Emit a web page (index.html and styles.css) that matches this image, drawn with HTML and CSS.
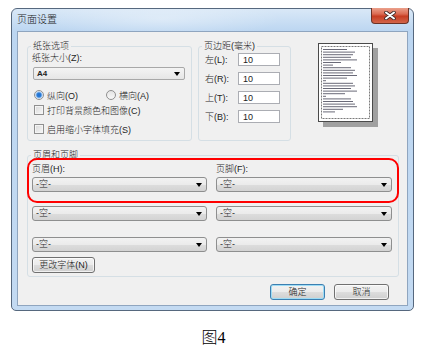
FILE: index.html
```html
<!DOCTYPE html>
<html lang="zh-CN">
<head>
  <meta charset="UTF-8" />
  <title>页面设置</title>
  <link rel="stylesheet" href="styles.css">
</head>
<body>

  <div class="window">
    <div class="titlebar">
      <span class="title">页面设置</span>
      <span class="close-btn">
        <svg width="12" height="9" viewBox="0 0 12 9">
          <path d="M2 1.5 L10 7.5 M10 1.5 L2 7.5" stroke="#3b2a28" stroke-width="3.6" stroke-linecap="round"/>
          <path d="M2 1.5 L10 7.5 M10 1.5 L2 7.5" stroke="#fff" stroke-width="2" stroke-linecap="round"/>
        </svg>
      </span>
    </div>

    <div class="client">
      <div class="top-row">
        <div class="group paper">
          <span class="legend">纸张选项</span>
          <div class="label">纸张大小(Z):</div>
          <div class="combo combo-flat"><span class="a4">A4</span><i class="arrow"></i></div>
          <div class="radio-row">
            <span class="radio-item first"><i class="radio checked"></i>纵向(O)</span>
            <span class="radio-item"><i class="radio"></i>横向(A)</span>
          </div>
          <div class="check-row"><i class="check"></i>打印背景颜色和图像(C)</div>
          <div class="check-row second"><i class="check"></i>启用缩小字体填充(S)</div>
        </div>

        <div class="group margins">
          <span class="legend">页边距(毫米)</span>
          <div class="margin-row"><span class="m-label">左(L):</span><span class="field">10</span></div>
          <div class="margin-row"><span class="m-label">右(R):</span><span class="field">10</span></div>
          <div class="margin-row"><span class="m-label">上(T):</span><span class="field">10</span></div>
          <div class="margin-row"><span class="m-label">下(B):</span><span class="field">10</span></div>
        </div>

        <div class="preview">
          <svg width="55" height="79" viewBox="0 0 55 79">
            <rect x="0.5" y="0.5" width="54" height="78" fill="#fff" stroke="#4a4a4a"/>
            <rect x="3.5" y="3.5" width="48" height="72" fill="none" stroke="#7a7a7a" stroke-dasharray="2 1"/>
            <g fill="#6a6a78">
              <rect x="5" y="6" width="24" height="1"/>
              <rect x="5" y="8.6" width="32" height="1"/>
              <rect x="5" y="11.2" width="30" height="1"/>
              <rect x="5" y="13.8" width="28" height="1"/>
              <rect x="5" y="16.4" width="34" height="1"/>
              <rect x="5" y="19" width="18" height="1"/>
              <rect x="5" y="21.6" width="10" height="1"/>
              <rect x="5" y="24.2" width="28" height="1"/>
              <rect x="5" y="26.8" width="32" height="1"/>
              <rect x="5" y="29.4" width="30" height="1"/>
              <rect x="5" y="32" width="34" height="1"/>
              <rect x="5" y="34.6" width="24" height="1"/>
              <rect x="5" y="37.2" width="3" height="1"/>
              <rect x="5" y="39.8" width="30" height="1"/>
              <rect x="5" y="42.4" width="32" height="1"/>
              <rect x="5" y="45" width="28" height="1"/>
              <rect x="5" y="47.6" width="34" height="1"/>
              <rect x="5" y="50.2" width="22" height="1"/>
              <rect x="5" y="52.8" width="3" height="1"/>
              <rect x="5" y="55.4" width="28" height="1"/>
              <rect x="5" y="58" width="30" height="1"/>
              <rect x="5" y="60.6" width="32" height="1"/>
              <rect x="5" y="63.2" width="34" height="1"/>
              <rect x="5" y="65.8" width="20" height="1"/>
              <rect x="5" y="68.4" width="12" height="1"/>
            </g>
          </svg>
        </div>
      </div>

      <div class="group hf">
        <span class="legend">页眉和页脚</span>
        <div class="hf-row labels">
          <span class="col">页眉(H):</span>
          <span class="col">页脚(F):</span>
        </div>
        <div class="hf-row row1">
          <div class="combo col"><span>-空-</span><i class="arrow"></i></div>
          <div class="combo col"><span>-空-</span><i class="arrow"></i></div>
        </div>
        <div class="hf-row row2">
          <div class="combo col"><span>-空-</span><i class="arrow"></i></div>
          <div class="combo col"><span>-空-</span><i class="arrow"></i></div>
        </div>
        <div class="hf-row row3">
          <div class="combo col"><span>-空-</span><i class="arrow"></i></div>
          <div class="combo col"><span>-空-</span><i class="arrow"></i></div>
        </div>
        <div class="btn font-btn">更改字体(N)</div>
        <div class="highlight"></div>
      </div>

      <div class="buttons">
        <div class="btn default">确定</div>
        <div class="btn">取消</div>
      </div>
    </div>
  </div>

  <p class="caption">图4</p>

</body>
</html>
```

FILE: styles.css
```css
body {
  margin: 0;
  background: #fff;
  font-family: "Liberation Sans", "Noto Sans CJK SC", sans-serif;
  font-size: 9px;
  font-weight: 300;
  color: #1e1e1e;
}

.window {
  margin: 8px 0 0 11px;
  width: 403px;
  height: 303px;
  box-sizing: border-box;
  border: 1px solid #56687e;
  border-radius: 6px 6px 5px 5px;
  padding: 0 5px 4px 5px;
  background:
    radial-gradient(ellipse 120px 20px at 150px 10px, rgba(255,255,255,0.35), rgba(255,255,255,0)),
    linear-gradient(to bottom, #d9e8f7 0, #bcd6f1 22px, #c3daf2 100%);
}

.titlebar {
  height: 22px;
  display: flex;
  justify-content: space-between;
  align-items: flex-start;
}

.title {
  font-size: 10px;
  line-height: 22px;
  color: #1a1a1a;
}

.close-btn {
  width: 38px;
  height: 16px;
  box-sizing: border-box;
  margin: -1px -1px 0 0;
  border: 1px solid #6b3226;
  border-top: none;
  border-radius: 0 0 4px 4px;
  background: linear-gradient(to bottom, #eba18c 0, #db6b52 40%, #c73d22 55%, #d2654a 100%);
  display: flex;
  justify-content: center;
  align-items: center;
}

.client {
  height: 275px;
  box-sizing: border-box;
  border: 1px solid #8fa5bf;
  background: #f0f0f0;
  padding: 14px 8px 0 9px;
}

.top-row {
  display: flex;
  align-items: flex-start;
}

.group {
  position: relative;
  box-sizing: border-box;
  border: 1px solid #d5dfe5;
  border-radius: 3px;
}

.legend {
  position: absolute;
  top: -7px;
  left: 3px;
  padding: 0 2px;
  line-height: 12px;
  background: #f0f0f0;
}

.paper {
  width: 165px;
  height: 95px;
  padding: 5px 0 0 4px;
}

.label {
  line-height: 12px;
}

.combo {
  height: 15px;
  box-sizing: border-box;
  border: 1px solid #8e8f8f;
  border-radius: 3px;
  background: linear-gradient(to bottom, #f2f2f2 0, #ebebeb 50%, #dddddd 51%, #d3d3d3 100%);
  display: flex;
  align-items: center;
  justify-content: space-between;
  padding: 0 4px 0 3px;
  line-height: 13px;
}

.combo-flat {
  width: 152px;
  height: 13px;
  margin: 3px 0 0 1px;
  border-color: #a8a8a8;
  border-radius: 2px;
  background: linear-gradient(to bottom, #f4f4f4, #e6e6e6);
  line-height: 11px;
}

.a4 {
  font-size: 8px;
  font-weight: bold;
}

.arrow {
  width: 0;
  height: 0;
  border-left: 3px solid transparent;
  border-right: 3px solid transparent;
  border-top: 4px solid #000;
}

.radio-row {
  display: flex;
  align-items: center;
  height: 14px;
  margin-top: 8px;
}

.radio-item {
  display: flex;
  align-items: center;
  gap: 3px;
}

.radio-item.first {
  width: 72px;
}

.radio {
  width: 10px;
  height: 10px;
  box-sizing: border-box;
  margin-left: 2px;
  border: 1px solid #8f8f8f;
  border-radius: 50%;
  background: linear-gradient(to bottom, #e4e4e4, #f8f8f8);
}

.radio.checked {
  background: radial-gradient(circle, #1f6fd0 0, #2a7cd8 2px, #9cc3ee 3px, #eef3f8 4px);
}

.check-row {
  display: flex;
  align-items: center;
  gap: 3px;
  height: 14px;
  margin-top: 1px;
}

.check-row.second {
  margin-top: 5px;
}

.check {
  width: 10px;
  height: 10px;
  box-sizing: border-box;
  margin-left: 2px;
  border: 1px solid #8f8f8f;
  background: linear-gradient(to bottom right, #d8d8d8, #f8f8f8);
  box-shadow: inset 0 0 0 1px #f4f4f4;
}

.margins {
  width: 93px;
  height: 95px;
  margin-left: 6px;
  padding: 6px 0 0 6px;
}

.margin-row {
  display: flex;
  align-items: center;
  height: 13px;
  margin-bottom: 6px;
}

.m-label {
  width: 33px;
}

.field {
  width: 42px;
  height: 13px;
  box-sizing: border-box;
  border: 1px solid #abadb3;
  background: #fff;
  padding-left: 4px;
  line-height: 12px;
}

.preview {
  width: 55px;
  height: 79px;
  margin: -3px 0 0 27px;
  box-shadow: 5px 5px 0 #a0a0a0;
}

.preview svg {
  display: block;
}

.hf {
  width: 372px;
  height: 122px;
  margin-top: 14px;
  padding: 7px 0 0 4px;
}

.hf-row {
  display: flex;
  gap: 9px;
}

.hf-row .col:first-child {
  width: 175px;
}

.hf-row .col:last-child {
  width: 176px;
}

.labels {
  line-height: 12px;
}

.row1 {
  margin-top: 2px;
}

.row2 {
  margin-top: 14px;
}

.row3 {
  margin-top: 16px;
}

.btn {
  height: 16px;
  box-sizing: border-box;
  border: 1px solid #707070;
  border-radius: 3px;
  background: linear-gradient(to bottom, #f2f2f2 0, #ebebeb 50%, #dddddd 51%, #cfcfcf 100%);
  box-shadow: inset 0 0 0 1px rgba(255,255,255,0.7);
  line-height: 14px;
  text-align: center;
}

.font-btn {
  width: 63px;
  margin-top: 5px;
}

.highlight {
  position: absolute;
  top: 2px;
  left: -1px;
  width: 372px;
  height: 45px;
  box-sizing: border-box;
  border: 2px solid #ff0000;
  border-radius: 10px;
}

.buttons {
  display: flex;
  justify-content: flex-end;
  gap: 9px;
  margin-top: 7px;
  padding-right: 10px;
  width: 372px;
  box-sizing: border-box;
}

.buttons .btn {
  width: 55px;
}

.btn.default {
  border-color: #3c7fb1;
  box-shadow: inset 0 0 0 1px #9ddcf5;
}

.caption {
  margin: 18px 0 0;
  text-align: center;
  font-family: "Liberation Serif", "Noto Sans CJK SC", serif;
  font-size: 16px;
  font-weight: 300;
  line-height: 18px;
  color: #000;
}
```
